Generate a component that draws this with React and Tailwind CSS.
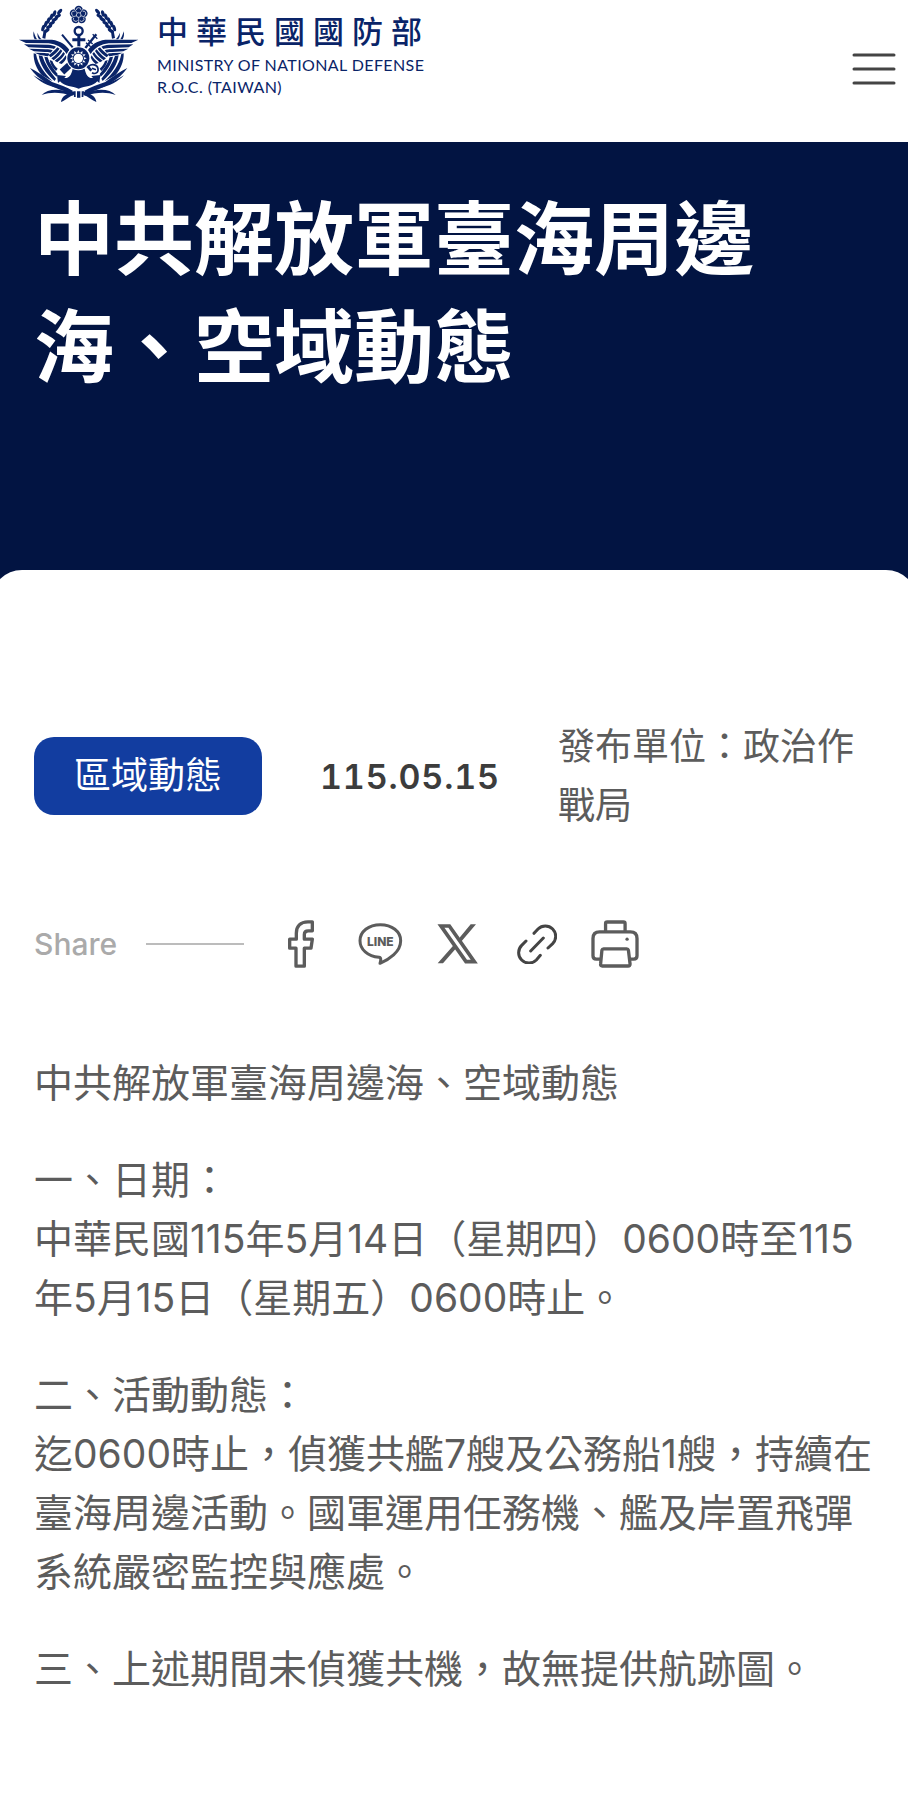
const NAVY = '#0a2468';

const WHEAT_GRAINS = [
  [104, 88],
  [112, 76],
  [120, 65],
  [129, 54],
  [138, 44],
];

const PETALS = [0, 72, 144, 216, 288];
const RAYS = [0, 30, 60, 90, 120, 150, 180, 210, 240, 270, 300, 330];

/** Left half of the emblem; the right half is the same drawing mirrored. */
const EmblemHalf = () => (
  <g>
    {/* Wheat ear */}
    {WHEAT_GRAINS.map(([x, y]) => (
      <g key={x} transform={`translate(${x} ${y}) rotate(38)`}>
        <ellipse cx="-6" cy="0" rx="5" ry="10" transform="rotate(-22 -6 0)" />
        <ellipse cx="7" cy="0" rx="5" ry="10" transform="rotate(22 7 0)" />
      </g>
    ))}
    <ellipse cx="149" cy="35" rx="5" ry="10" transform="rotate(40 149 35)" />
    <path d="M101 92 L97 114 L106 116 L109 96 Z" />

    {/* Wing: long outer feathers, then short ones fanning down */}
    <path d="M27 119 L126 119 C152 122 170 136 178 150 L170 162 C156 142 138 132 116 130 L48 129 Z" />
    <path d="M42 133 L116 134 C124 135 132 137 138 140 L132 147 C126 145 118 144 108 144 L56 142 Z" />
    <path d="M57 146 L108 148 C116 148 122 149 128 151 L122 158 C116 156 110 156 104 156 L72 154 Z" />
    <path d="M74 158 L104 159 C110 160 115 160 119 162 L114 169 C106 167 96 166 88 164 Z" />
    <path d="M142 142 C136 150 126 158 116 166 L122 172 C132 165 142 156 149 146 Z" />
    <path d="M152 148 C146 157 136 167 124 175 L131 181 C142 173 151 163 157 153 Z" />
    <path d="M160 156 C155 165 146 174 134 182 L142 187 C152 179 160 170 165 161 Z" />
    <path d="M167 166 C163 174 155 182 146 189 L155 192 C162 187 167 180 170 172 Z" />

    {/* Leaf blades */}
    <path d="M71 94 C69 104 70 112 74 118 H81 C76 110 73 102 71 94 Z" />
    <path d="M83 98 C81 107 84 114 88 118 H95 C89 112 85 106 83 98 Z" />
    <path d="M71 160 C70 184 80 208 96 226 L128 244 C104 220 84 194 78 162 Z" />
    <path d="M86 166 C90 192 104 218 134 243 L138 236 C118 212 104 190 97 168 Z" />
    <path d="M103 170 C108 192 120 212 140 230 L143 222 C130 206 118 190 113 172 Z" />
    <path d="M119 180 C121 192 128 204 138 213 L143 206 C134 198 129 190 127 183 Z" />
    <path d="M60 204 C80 214 104 230 126 246 C148 254 172 262 188 272 L188 280 C158 274 132 264 112 250 C90 238 72 222 60 204 Z" />
    <path d="M70 226 C88 244 112 259 144 264 L132 252 C108 248 88 238 70 226 Z" />
    <path d="M95 285 C112 268 142 264 188 278 L188 287 C150 276 122 275 95 285 Z" />
    <path d="M153 306 C154 290 170 279 192 275 L192 284 C178 288 168 300 153 306 Z" />
  </g>
);

const Emblem = () => (
  <svg viewBox="0 0 420 330" className="h-[110px] w-[140px] shrink-0" fill={NAVY} aria-hidden="true">
    {/* Crossed sword and rifle */}
    <g stroke={NAVY} strokeLinecap="butt">
      <path d="M156 104 L188 142" strokeWidth="6" />
      <path d="M259 103 L226 144" strokeWidth="7" />
      <path d="M248 103 L262 116 M234 120 L248 132 M228 128 L242 140" strokeWidth="4" />
      <path d="M184 190 L156 216" strokeWidth="20" />
      <path d="M228 194 L244 212" strokeWidth="8" />
    </g>
    <path
      d="M236 199 C246 190 262 194 264 206 C266 218 256 224 246 218 M246 205 L258 209"
      fill="none"
      stroke={NAVY}
      strokeWidth="5"
    />

    <EmblemHalf />
    <g transform="translate(412 0) scale(-1 1)">
      <EmblemHalf />
    </g>

    {/* Plum blossom */}
    <g transform="translate(206 45)">
      {PETALS.map((deg) => (
        <g key={deg} transform={`rotate(${deg})`}>
          <circle cx="0" cy="-15" r="12.5" />
          <path d="M-7 -15 A7 7 0 0 1 7 -15" fill="none" stroke="white" strokeWidth="2" />
        </g>
      ))}
      <circle r="12" />
      {PETALS.map((deg) => (
        <path key={deg} d="M0 6 V22" stroke="white" strokeWidth="1.8" transform={`rotate(${deg})`} />
      ))}
      <circle r="7" fill={NAVY} stroke="white" strokeWidth="2" />
    </g>

    {/* Anchor */}
    <circle cx="206" cy="93" r="12" fill="none" stroke={NAVY} strokeWidth="7" />
    <path d="M202 104 H211 V115 H226 V124 H211 V148 H202 V124 H187 V115 H202 Z" />
    <path d="M141 225 L168 228 L163 234 C176 236 184 226 188 206 H224 C228 226 236 236 249 234 L244 228 L271 225 L268 249 L262 244 C248 260 226 258 206 266 C186 258 164 260 150 244 L144 249 Z" />

    {/* Sun */}
    <g transform="translate(205 175)">
      <circle r="36" fill="white" />
      <circle r="33" />
      {RAYS.map((deg) => (
        <path key={deg} d="M-5 -14 L0 -25 L5 -14 Z" fill="white" transform={`rotate(${deg})`} />
      ))}
      <circle r="17" />
      <circle r="14" fill="white" />
    </g>

    {/* Binding */}
    <path d="M190 274 H197 V291 H192 Z M201 274 H211 V293 H201 Z M215 274 H222 L220 291 H215 Z" />
  </svg>
);

const FacebookIcon = () => (
  <svg viewBox="808 62 78 143" className="h-12 w-[26px]" fill="none" stroke="#5c5c5c" strokeWidth="10" strokeLinejoin="round">
    <path d="M881 67 H868 C845 67 833 80 833 101 V119 H813 V146 H832 V200 H857 V146 H877 L881 119 H857 V105 C857 97 861 94 869 94 H881 Z" />
  </svg>
);

const LineIcon = () => (
  <svg viewBox="58 75 135 132" className="h-11 w-[45px]" fill="none">
    <path
      d="M125 83 C90 83 64 104 64 131 C64 157 87 178 121 181 C128 182 127 189 124 199 C150 188 186 165 186 131 C186 104 160 83 125 83 Z"
      stroke="#5c5c5c"
      strokeWidth="9"
      strokeLinejoin="round"
    />
    <text x="125" y="147" textAnchor="middle" fontSize="36" fontWeight="800" fill="#5c5c5c" className="font-['Inter',sans-serif]">
      LINE
    </text>
  </svg>
);

const XIcon = () => (
  <svg viewBox="295 77 123 120" className="h-10 w-[41px]" fill="#5c5c5c">
    <path d="M307 83 H332 L407 190 H382 Z" fill="none" stroke="#5c5c5c" strokeWidth="11" />
    <path d="M396 78 H412 L366 132 L357 125 Z M297 195 H313 L355 147 L346 139 Z" />
  </svg>
);

const LinkIcon = () => (
  <svg viewBox="534 76 120 120" className="size-10" fill="none" stroke="#444444" strokeWidth="9" strokeLinecap="round">
    <path d="M585 104 L597 91 A31 31 0 0 1 641 135 L627 148 M561 127 L548 140 A31 31 0 0 0 592 184 L604 170 M575 157 L613 118" />
  </svg>
);

const PrintIcon = () => (
  <svg viewBox="755 64 145 145" className="size-12" fill="none" stroke="#5c5c5c" strokeWidth="10" strokeLinejoin="round">
    <path d="M799 98 V75 Q799 70 804 70 H853 Q858 70 858 75 V98" />
    <path d="M783 182 H771 Q761 182 761 172 V120 Q761 100 781 100 H874 Q894 100 894 120 V172 Q894 182 884 182 H874" />
    <path d="M793 151 H863 Q867 151 868 155 L873 197 Q873 203 867 203 H789 Q783 203 784 197 L788 155 Q789 151 793 151 Z" />
    <circle cx="864" cy="122" r="5" fill="#5c5c5c" stroke="none" />
  </svg>
);

const Header = () => (
  <header className="flex h-[142px] items-start justify-between pr-3 pl-[10px]">
    <a href="#" className="flex text-[#0a2468]">
      <Emblem />
      <span className="flex flex-col pt-3 pl-[7px]">
        <span className="text-[31px] leading-10 font-medium tracking-[8px]">中華民國國防部</span>
        <span className="pt-[2px] font-['Lato',sans-serif] text-base leading-[22px] tracking-wide">
          MINISTRY OF NATIONAL DEFENSE
          <br />
          R.O.C. (TAIWAN)
        </span>
      </span>
    </a>
    <button type="button" aria-label="選單" className="mt-[53px]">
      <svg viewBox="0 0 44 32" className="h-8 w-11" stroke="#444444" strokeWidth="3" strokeLinecap="round">
        <path d="M2 2 H42 M2 16 H42 M2 30 H42" />
      </svg>
    </button>
  </header>
);

const SHARE_LINKS = [
  { label: 'Facebook', icon: <FacebookIcon />, className: 'ml-11' },
  { label: 'LINE', icon: <LineIcon />, className: 'ml-11' },
  { label: 'X', icon: <XIcon />, className: 'ml-[34px]' },
  { label: '複製連結', icon: <LinkIcon />, className: 'ml-[39px]' },
];

const App = () => (
  <div className="min-h-screen overflow-hidden bg-white font-['Inter','Noto_Sans_CJK_TC',sans-serif] text-[#5c5c5c]">
    <Header />

    <section className="bg-[#021442] px-[34px] pt-[43px] pb-[199px] text-white">
      <h1 className="text-[80px] leading-[108px] font-bold">
        中共解放軍臺海周邊
        <br />
        海、空域動態
      </h1>
    </section>

    <main className="-mx-[9px] mt-[-30px] rounded-t-[31px] bg-white px-[43px] pt-[147px] pb-[90px]">
      <div className="flex items-center gap-[58px]">
        <span className="shrink-0 rounded-[20px] bg-[#123da0] px-10 py-[10px] text-[37px] leading-[58px] text-white">
          區域動態
        </span>
        <time
          dateTime="2026-05-15"
          className="shrink-0 text-[34px] leading-[59px] font-semibold tracking-wide text-[#3c3c3c] tabular-nums"
        >
          115.05.15
        </time>
        <p className="flex-1 text-[37px] leading-[59px]">發布單位：政治作戰局</p>
      </div>

      <div className="mt-[79px] flex h-[60px] items-center">
        <span className="text-[30px] leading-9 font-medium text-[#aaaaaa]">Share</span>
        <span className="ml-[29px] h-[2px] w-[98px] bg-[#bcbcbc]" />
        {SHARE_LINKS.map(({ label, icon, className }) => (
          <a key={label} href="#" aria-label={label} className={className}>
            {icon}
          </a>
        ))}
        <button type="button" aria-label="列印" className="ml-[34px]">
          <PrintIcon />
        </button>
      </div>

      <article className="mt-[79px] flex flex-col gap-[38px] text-[39px] leading-[59px]">
        <p>中共解放軍臺海周邊海、空域動態</p>
        <p>
          一、日期：
          <br />
          中華民國115年5月14日（星期四）0600時至115年5月15日（星期五）0600時止。
        </p>
        <p>
          二、活動動態：
          <br />
          迄0600時止，偵獲共艦7艘及公務船1艘，持續在臺海周邊活動。國軍運用任務機、艦及岸置飛彈系統嚴密監控與應處。
        </p>
        <p>三、上述期間未偵獲共機，故無提供航跡圖。</p>
      </article>
    </main>
  </div>
);

export default App;
